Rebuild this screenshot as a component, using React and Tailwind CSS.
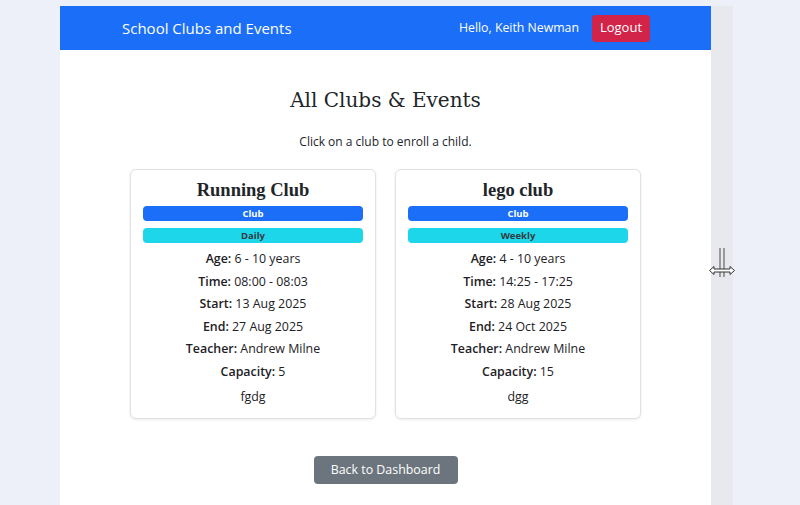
import React from 'react';

const clubs = [
  {
    name: 'Running Club',
    type: 'Club',
    freq: 'Daily',
    age: '6 - 10 years',
    time: '08:00 - 08:03',
    start: '13 Aug 2025',
    end: '27 Aug 2025',
    teacher: 'Andrew Milne',
    capacity: '5',
    desc: 'fgdg',
  },
  {
    name: 'lego club',
    type: 'Club',
    freq: 'Weekly',
    age: '4 - 10 years',
    time: '14:25 - 17:25',
    start: '28 Aug 2025',
    end: '24 Oct 2025',
    teacher: 'Andrew Milne',
    capacity: '15',
    desc: 'dgg',
  },
];

const ClubCard = ({ club }) => (
  <div className="w-[246px] h-[250px] bg-white border border-[#dfe1e5] rounded-md shadow-[0_1px_3px_rgba(0,0,0,0.08)] px-3 pt-[8px] text-center">
    <h3 className="font-['Liberation_Serif',serif] font-bold text-[18.5px] leading-[24px] text-[#212529]">{club.name}</h3>
    <div className="mt-[4px] h-[15px] rounded bg-[#1a6ef7] text-white text-[9.5px] font-bold leading-[15px]">{club.type}</div>
    <div className="mt-[7px] h-[15px] rounded bg-[#1dd6ea] text-[#333a40] text-[9.5px] font-bold leading-[15px]">{club.freq}</div>
    <div className="mt-[5px] text-[12.4px] leading-[22.5px] text-[#1d2125]">
      <p><b className="font-semibold">Age:</b> {club.age}</p>
      <p><b className="font-semibold">Time:</b> {club.time}</p>
      <p><b className="font-semibold">Start:</b> {club.start}</p>
      <p><b className="font-semibold">End:</b> {club.end}</p>
      <p><b className="font-semibold">Teacher:</b> {club.teacher}</p>
      <p><b className="font-semibold">Capacity:</b> {club.capacity}</p>
      <p className="mt-[3px]">{club.desc}</p>
    </div>
  </div>
);

export default function App() {
  return (
    <div className="relative w-[800px] h-[505px] overflow-hidden bg-[#edf0f8] pt-[6px] pl-[60px] font-['Open_Sans',sans-serif] text-[#212529]">
      <div className="flex h-full">
        <div className="w-[651px] h-full bg-white">
          {/* Navbar */}
          <nav className="h-[44px] bg-[#1a6ef7] flex items-center pl-[62px] pr-[61px] text-white">
            <span className="text-[15px]">School Clubs and Events</span>
            <div className="ml-auto flex items-center gap-[13px]">
              <span className="text-[12.3px]">Hello, Keith Newman</span>
              <button className="h-[27px] w-[58px] rounded bg-[#d22349] text-[13px] text-white">Logout</button>
            </div>
          </nav>

          <div className="flex flex-col items-center">
            <h1 className="mt-[35px] font-['DejaVu_Serif',serif] text-[20px] leading-[30px] text-[#212529]">All Clubs &amp; Events</h1>
            <p className="mt-[18px] text-[12px] leading-[18px]">Click on a club to enroll a child.</p>
            <div className="mt-[18px] flex gap-[19px]">
              {clubs.map((c) => (
                <ClubCard key={c.name} club={c} />
              ))}
            </div>
            <button className="mt-[37px] h-[28px] w-[144px] rounded bg-[#6c757d] text-white text-[12.4px]">Back to Dashboard</button>
          </div>
        </div>
        <div className="w-[22px] h-full bg-[#e8e9ef]" />
      </div>

      {/* resize cursor */}
      <svg className="absolute left-[708px] top-[247px]" width="28" height="32" viewBox="0 0 28 32">
        <rect x="11" y="1" width="2" height="29" fill="#9a9a9a" />
        <rect x="15" y="1" width="2" height="29" fill="#9a9a9a" />
        <path d="M1.5 23.5 L6 19.5 L6 22 L22 22 L22 19.5 L26.5 23.5 L22 27.5 L22 25 L6 25 L6 27.5 Z" fill="#fff" stroke="#333" strokeWidth="1" />
      </svg>
    </div>
  );
}
